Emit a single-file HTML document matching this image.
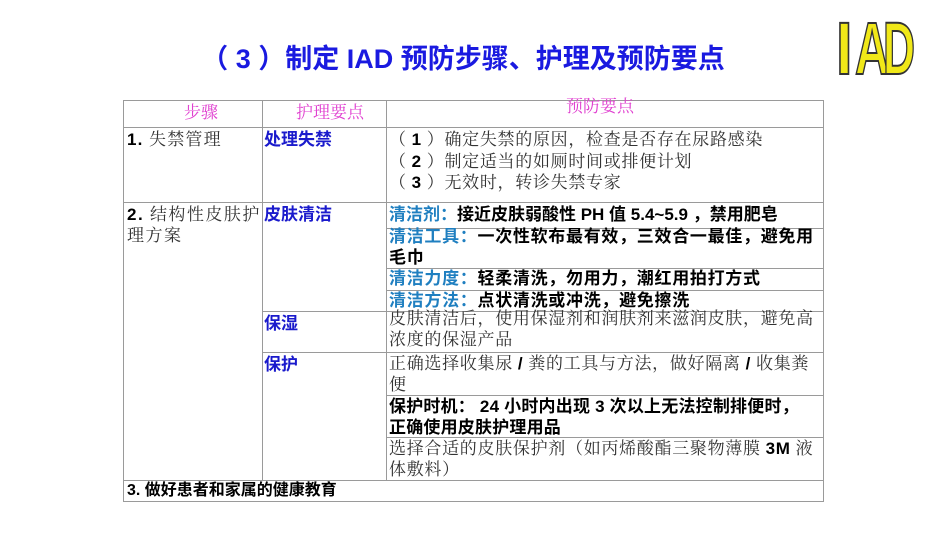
<!DOCTYPE html>
<html><head><meta charset="utf-8"><style>
body{margin:0;width:950px;height:535px;background:#fff;position:relative;overflow:hidden;font-family:"Liberation Sans","Noto Sans CJK SC",sans-serif;}
.a{position:absolute;}
.h{position:absolute;height:1px;background:#9a9a9a;}
.v{position:absolute;width:1px;background:#9a9a9a;}
.t{position:absolute;font-size:17px;line-height:21px;color:#333;font-family:"Liberation Serif","Noto Serif CJK SC",serif;white-space:nowrap;letter-spacing:0.7px;}
.b{font-weight:bold;color:#000;font-family:"Liberation Sans","Noto Sans CJK SC",sans-serif;}
.bl{color:#1a1acc;font-weight:bold;font-family:"Liberation Sans","Noto Sans CJK SC",sans-serif;letter-spacing:0;}
.lb{color:#1f7fc0;font-weight:bold;}
.pk{color:#e040d0;font-size:17px;letter-spacing:0;}
</style></head><body>
<div class="a" style="left:0;width:926px;top:37px;text-align:center;font-size:27px;font-weight:bold;color:#1a1ae0;">（ 3 ）制定 IAD 预防步骤、护理及预防要点</div>
<svg class="a" style="left:830px;top:6px" width="100" height="76"><g font-family="Liberation Sans" font-weight="bold" font-size="74" fill="#f0e818" stroke="#333" stroke-width="2"><text transform="translate(6,68) scale(0.8,1)">I</text><text transform="translate(25,68) scale(0.64,1)">A</text><text transform="translate(53,68) scale(0.6,1)">D</text></g></svg>
<!-- grid -->
<div class="h" style="left:123px;width:700px;top:100px"></div>
<div class="h" style="left:123px;width:700px;top:127px"></div>
<div class="h" style="left:123px;width:700px;top:202px"></div>
<div class="h" style="left:386px;width:437px;top:228px"></div>
<div class="h" style="left:386px;width:437px;top:268px"></div>
<div class="h" style="left:386px;width:437px;top:290px"></div>
<div class="h" style="left:262px;width:561px;top:311px"></div>
<div class="h" style="left:262px;width:561px;top:352px"></div>
<div class="h" style="left:386px;width:437px;top:395px"></div>
<div class="h" style="left:386px;width:437px;top:437px"></div>
<div class="h" style="left:123px;width:700px;top:480px"></div>
<div class="h" style="left:123px;width:700px;top:501px"></div>
<div class="v" style="left:123px;top:100px;height:402px"></div>
<div class="v" style="left:262px;top:100px;height:380px"></div>
<div class="v" style="left:386px;top:100px;height:380px"></div>
<div class="v" style="left:823px;top:100px;height:402px"></div>
<!-- text -->
<div class="t pk" style="left:184px;top:102px">步骤</div>
<div class="t pk" style="left:296px;top:102px">护理要点</div>
<div class="t pk" style="left:566px;top:96px">预防要点</div>
<div class="t" style="left:127px;top:129px;letter-spacing:1.2px"><b class="b">1.</b> 失禁管理</div>
<div class="t bl" style="left:264px;top:129px">处理失禁</div>
<div class="t" style="left:389px;top:129px;line-height:21.5px">（ <b class="b">1</b> ）确定失禁的原因，检查是否存在尿路感染<br>（ <b class="b">2</b> ）制定适当的如厕时间或排便计划<br>（ <b class="b">3</b> ）无效时，转诊失禁专家</div>
<div class="t" style="left:127px;top:204px;letter-spacing:1.5px"><b class="b">2.</b> 结构性皮肤护<br>理方案</div>
<div class="t bl" style="left:264px;top:204px">皮肤清洁</div>
<div class="t b" style="left:389px;top:204px;letter-spacing:0px"><span class="lb">清洁剂：</span>接近皮肤弱酸性 PH 值 5.4~5.9 ，禁用肥皂</div>
<div class="t b" style="left:389px;top:226px"><span class="lb">清洁工具：</span>一次性软布最有效，三效合一最佳，避免用<br>毛巾</div>
<div class="t b" style="left:389px;top:268px"><span class="lb">清洁力度：</span>轻柔清洗，勿用力，潮红用拍打方式</div>
<div class="t b" style="left:389px;top:290px"><span class="lb">清洁方法：</span>点状清洗或冲洗，避免擦洗</div>
<div class="t bl" style="left:264px;top:313px">保湿</div>
<div class="t" style="left:389px;top:308px">皮肤清洁后，使用保湿剂和润肤剂来滋润皮肤，避免高<br>浓度的保湿产品</div>
<div class="t bl" style="left:264px;top:354px">保护</div>
<div class="t" style="left:389px;top:353px">正确选择收集尿 <b class="b">/</b> 粪的工具与方法，做好隔离 <b class="b">/</b> 收集粪<br>便</div>
<div class="t b" style="left:389px;top:396px;letter-spacing:0.2px">保护时机： 24 小时内出现 3 次以上无法控制排便时，<br>正确使用皮肤护理用品</div>
<div class="t" style="left:389px;top:438px">选择合适的皮肤保护剂（如丙烯酸酯三聚物薄膜 <b class="b">3M</b> 液<br>体敷料）</div>
<div class="t b" style="left:127px;top:480px;letter-spacing:0px;font-size:16px">3. 做好患者和家属的健康教育</div>
</body></html>
